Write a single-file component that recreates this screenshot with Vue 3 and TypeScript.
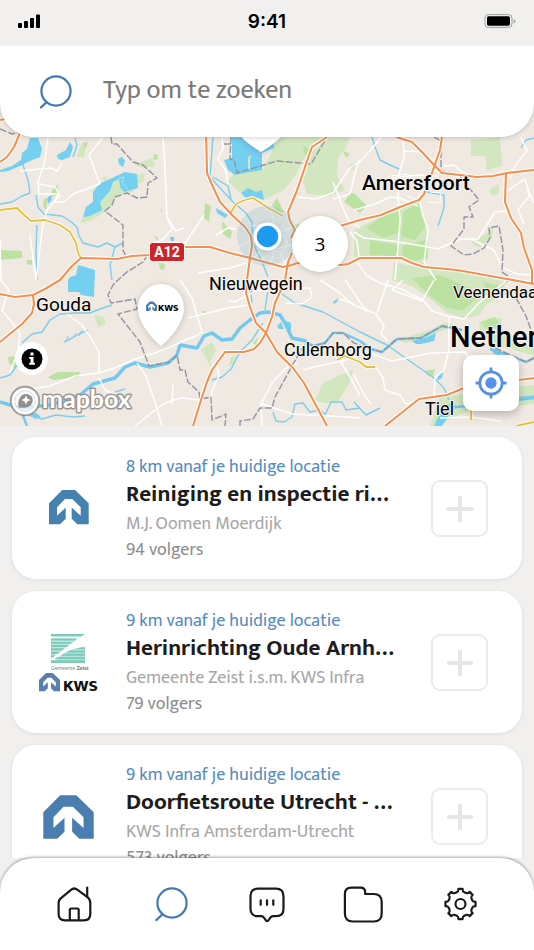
<script setup lang="ts">
import { ref } from 'vue'

interface Project {
  distance: string
  title: string
  owner: string
  followers: string
  logo: 'small' | 'zeist' | 'large'
}

interface Place {
  name: string
  x: number
  y: number
  size: number
  weight: number
}

const query = ref('')

const projects: Project[] = [
  { distance: '8 km vanaf je huidige locatie', title: 'Reiniging en inspectie ri…', owner: 'M.J. Oomen Moerdijk', followers: '94 volgers', logo: 'small' },
  { distance: '9 km vanaf je huidige locatie', title: 'Herinrichting Oude Arnh…', owner: 'Gemeente Zeist i.s.m. KWS Infra', followers: '79 volgers', logo: 'zeist' },
  { distance: '9 km vanaf je huidige locatie', title: 'Doorfietsroute Utrecht - …', owner: 'KWS Infra Amsterdam-Utrecht', followers: '573 volgers', logo: 'large' },
]

const places: Place[] = [
  { name: 'Amersfoort', x: 362, y: 190, size: 21, weight: 500 },
  { name: 'Nieuwegein', x: 209, y: 290, size: 18, weight: 400 },
  { name: 'Gouda', x: 36, y: 311, size: 19, weight: 400 },
  { name: 'Veenendaal', x: 453, y: 298, size: 17, weight: 400 },
  { name: 'Culemborg', x: 284, y: 356, size: 18, weight: 400 },
  { name: 'Tiel', x: 425, y: 415, size: 18, weight: 400 },
]

const house = 'M0 13.3 13.3 0H26L39.7 13.3V34.3H28.3L22.7 28.7V17.6L31.7 25.7V17.3L23.3 9H16L8 17.3V25.7L16.7 17.6V28.7L11 34.3H0Z'

const paleGreens = [
  '275,137 327,137 312,150 303,160 296,175 284,190 266,199 250,195 240,192 228,182 234,173 262,170 272,152',
  '330,137 350,137 346,148 338,158 337,176 345,190 330,196 307,194 303,182 312,152',
  '80,223 90,205 100,190 120,178 145,173 143,182 137,184 133,192 117,195 111,206 103,213 92,220',
  '354,230 381,217 419,202 426,227 429,250 424,267 401,257 354,258',
  '394,262 424,269 457,272 507,282 500,296 487,304 478,316 464,318 447,313 432,300 412,286 392,280',
  '471,140 500,137 502,165 487,171 485,156 471,156',
  '489,190 499,184 499,193 492,196',
  '323,383 342,374 353,370 350,382 342,395 337,403 323,403 315,400',
  '479,323 490,318 502,318 499,330 512,340 534,346 534,356 500,346 480,334',
  '398,340 430,330 445,323 460,326 440,331 422,340 405,343',
  '201,350 212,342 216,350 210,362 213,371 206,358',
  '471,240 486,234 493,226 492,238 480,247 474,246',
  '440,397 534,385 534,404 470,410 436,426 430,426',
  '231,357 236,356 234,364 229,366',
  '94,315 103,316 106,324 98,327',
  '80,146 87,142 84,157 77,157',
  '102,178 107,176 106,182',
  '134,165 152,158 155,166 144,168',
  '348,167 358,160 356,170',
  '160,208 163,211 161,213',
]

const greens = [
  '354,193 367,206 360,213 344,202 350,193',
  '381,217 400,211 400,232 384,238 366,228',
  '403,212 419,203 426,225 415,240 401,236',
  '370,240 398,245 396,256 370,255',
  '402,246 426,240 428,258 412,261 403,256',
  '412,278 440,275 465,286 480,296 462,311 446,307 430,296',
  '483,282 500,286 490,298',
  '0,250 22,251 22,258 0,260',
  '48,377 58,372 80,372 79,377 53,380',
  '8,357 20,356 15,369 9,363',
  '205,203 211,206 209,222 204,218',
  '222,221 232,232 230,239 223,234',
  '44,199 47,199 46,210 43,206',
  '52,190 58,184 57,195 51,197',
  '82,143 88,142 86,148',
  '27,260 32,260 32,265 27,264',
  '44,205 47,202 46,211',
  '272,205 277,198 284,212 278,212',
  '295,225 306,222 307,232 298,234',
  '425,371 435,369 433,377 428,376',
  '480,322 495,317 500,325 488,330',
  '154,235 158,238 157,241',
  '159,263 165,264 164,270 160,269',
  '253,343 258,337 256,346',
  '202,311 206,311 205,315',
  '154,154 158,155 157,160 153,159',
  '343,151 350,154 346,158',
  '303,146 310,149 305,156',
]

const waters = [
  '22,153 27,149 30,138 38,138 42,149 40,157 32,160 20,166 8,171 0,172 0,170 12,166 21,160',
  '57,155 66,150 70,142 73,147 70,157 62,160 58,159',
  '118,159 122,157 125,161 123,167 119,164',
  '83,217 86,207 93,202 93,192 99,184 125,172 137,174 138,188 124,192 120,187 119,179 113,182 110,191 100,202 102,210 90,216',
  '232,137 274,137 274,148 262,153 262,170 245,173 235,175 228,170 224,160 232,158',
  '68,280 70,277 76,275 78,265 85,267 95,270 94,297 81,295 79,292 68,292',
  '216,208 228,215 225,218 217,213',
  '241,193 248,188 256,192 262,190 264,200 258,198 252,196 246,198',
  '47,198 51,195 52,200 48,204',
  '170,237 174,237 174,241 171,241',
  '277,326 281,322 284,329 279,329',
  '286,321 291,323 291,331 286,328',
  '333,302 338,298 337,302 334,304',
  '412,341 425,338 436,333 434,341 421,344 416,344',
  '438,375 443,372 442,378 437,381',
  '30,414 36,413 41,417 35,419',
  '490,348 497,350 502,356 494,354',
  '437,419 448,404 456,405 442,426 434,426',
]

const streams = [
  '22,162 28,180 30,193 22,196 12,202 0,204',
  '36,195 38,207 44,214 62,216 70,221 77,227 79,236 83,243 98,247 107,243 115,247 123,243',
  '115,247 110,265 112,280',
  '75,138 77,145 73,157',
  '37,225 36,250 37,280',
  '213,137 210,177 222,190 233,202 246,213 252,222 253,243 262,262 268,277',
  '213,177 228,186 231,199',
  '253,280 251,293 252,303',
  '271,280 267,296 265,310',
  '0,378 10,375 18,364 22,348',
  '22,343 32,334 42,332 50,320 60,314 75,313 90,313 100,309 112,305',
  '64,342 72,338 79,334 88,330',
  '282,294 295,303 323,312 360,332 387,345 434,378 444,388 449,400',
  '212,380 222,377 231,369 240,352 252,340 263,323',
  '372,137 375,147 380,160 390,165 399,169',
  '427,192 444,195 444,208 438,226',
  '273,412 276,421 284,422 292,417 295,404 303,403 310,412 320,410 325,415 331,402 342,402 346,410 360,408',
  '28,415 42,419 56,415 73,417 85,416',
  '500,400 534,396',
  '115,392 125,389',
  '354,402 366,415 380,408',
  '521,148 526,140 534,138',
]

const rivers = [
  '0,402 20,408 50,405 80,395 93,384 115,378 125,367 135,363 150,367 168,363 177,355 180,345 197,348 204,336 212,333 222,340 232,339 240,328 250,320 260,313 268,312 280,315 285,323 292,338 306,341',
]

const minorRivers = [
  '20,408 27,426',
  '306,341 313,346 325,343 333,333 343,333 360,341 371,349 382,352 397,339 421,338 442,326 462,330',
  '490,349 508,355 526,362 534,358',
  '448,408 475,405 534,398',
]

const roads = [
  '48,137 45,160 38,182 39,194 58,194 55,201 47,210 43,225 40,247 36,280',
  '39,184 55,187 60,196 54,202 64,202 73,194 100,184',
  '89,155 100,184',
  '89,155 103,137',
  '20,171 51,168 57,171 62,163',
  '163,137 165,168 167,217 172,229 162,240 150,246',
  '167,217 176,231 184,228',
  '0,240 1,280 9,290 2,310 10,320 20,333 18,350 10,373',
  '30,235 36,280',
  '30,389 50,386 75,376 98,373 115,368 135,359 155,353 180,343',
  '67,314 82,325 91,338 99,352 99,372',
  '99,378 105,390 120,397',
  '137,363 146,376 155,402 162,426',
  '135,426 150,414 165,403 180,398',
  '173,385 172,404',
  '180,280 192,298 202,332 196,336 180,342',
  '180,251 184,245 204,215',
  '188,318 228,308 249,305',
  '228,301 235,302 258,290 276,292',
  '284,288 310,288 312,297 302,304 286,303',
  '320,280 340,293 352,304 376,314 384,326 381,334 388,341',
  '345,280 367,312',
  '388,280 377,313',
  '333,199 350,194 357,165 375,145 381,137',
  '297,197 315,199 333,193 349,169 360,160',
  '333,182 343,208 348,219 360,228',
  '354,232 364,238 392,241 423,246 438,249 460,239 478,239 495,212 506,211',
  '354,210 375,204 390,197 400,198 418,206',
  '403,137 404,158 399,174 398,194 400,220 398,247 395,280',
  '419,200 423,216 428,230 424,262 436,280',
  '391,178 418,175 438,176',
  '404,151 424,152 434,162',
  '444,166 454,165 462,172 470,175',
  '471,239 494,250 502,267 517,274 534,275',
  '521,137 527,151 516,164 510,178',
  '507,191 525,179 530,195 518,210 524,224',
  '527,190 534,203',
  '354,258 367,276 380,283 401,289 423,300 432,311 447,316 464,319',
  '464,319 480,302 507,280',
  '403,280 392,290 422,301 434,280',
  '449,317 449,350 444,370 435,378 434,397',
  '297,363 285,369 272,383 261,404 262,426',
  '303,370 319,366 346,360 366,352 392,361 431,353 465,352 471,360',
  '259,403 292,414 330,416 360,418',
  '341,362 350,377 360,396',
  '376,367 383,378 385,390 400,395 406,404 414,402 426,397',
  '354,375 365,396 371,404',
  '180,398 200,400',
  '217,364 219,376 212,391 211,402',
  '340,299 354,304',
  '440,418 470,417 501,421',
  '216,235 228,228 236,229',
  '198,273 230,268 246,263',
  '350,232 357,241 359,256',
  '222,137 223,148 218,159 226,171 228,184',
]

const streets = [
  '238,247 260,237 292,228',
  '252,260 262,250 284,226',
  '258,262 276,249 292,245',
  '257,248 280,252 286,266',
  '264,225 282,234 292,250',
  '273,216 275,246 271,263',
  '243,216 252,226 266,224',
  '382,184 390,176 406,174 418,183',
  '405,195 417,200 421,190',
  '430,192 441,193 440,203 428,202',
]

const motorways = [
  '0,120 5,119',
  '0,162 7,157 14,147 20,133',
  '0,294 15,297 33,295 45,289 60,280 72,266 81,258 117,259 132,256 150,255 186,247 210,247 230,253 250,258 283,267 292,265 297,263 340,265 348,264 360,258 401,258 412,263 424,267 457,270 507,279 534,284',
  '33,295 34,304 32,313 22,324 0,342',
  '206,130 207,173 213,187 220,202 232,215 245,227 251,236 252,246 250,258 247,280 246,293 250,307 256,323 266,333 277,352 293,368 304,383 327,426',
  '327,137 312,147 308,158 303,173 296,193 288,212 290,221 295,230 291,238',
  '292,253 288,262 287,268 285,280 281,290 275,303 272,317 266,333 260,343 254,349 244,352 225,352 212,370 207,382 202,397 193,426',
  '340,226 360,220 381,215 400,207 419,200 424,194 427,187 434,167 440,150 442,137',
  '396,137 412,142 422,152 434,165 442,173 460,175 477,177 493,176 507,173 534,170',
  '506,173 505,202 511,218 521,233 524,248 532,270 532,284',
  '385,426 419,399 447,395 464,388 519,380 534,378',
]

const yellowRoads = [
  '0,210 17,208 23,214 31,221 45,220 60,225 70,232 76,243 78,253 81,258',
  '230,214 236,204 245,200 253,198 270,209 283,216',
  '337,360 345,356 360,362 366,367 375,367',
  '471,410 471,420',
  '516,426 534,422',
]

const borders = [
  '111,137 112,144 117,144 133,162 143,165 157,178 148,183 147,197 137,198 127,193 115,197 112,205 105,211 123,225 123,250 126,257 147,256 143,262 127,272 118,280 113,285 108,295 111,303 135,299 137,309 118,314 140,342 149,366 170,362 177,355 180,370 185,370 188,382 199,392 200,399 211,397 212,420 226,414 225,426',
  '240,426 240,421 253,419 260,408 272,408 275,397 297,357 306,343 313,346 325,343 333,333 343,333 354,343 371,349 382,352 397,339 421,338 442,326 462,330',
  '231,137 230,159 234,160 237,173 277,161 311,164 327,137',
  '224,144 231,144',
  '434,137 441,141 441,171 459,174 470,189 479,200 469,207 473,217 464,217 464,229 451,246 464,255 473,254 484,248 490,238 489,228 499,226 503,250 502,272 508,276 507,282',
  '516,298 526,316 531,330 534,336',
  '495,348 515,357 526,362 534,358',
  '0,129 12,134 22,132',
]

// Outline of a cogwheel with eight rounded teeth, centred on (cx, cy).
function cog(cx: number, cy: number): string {
  const parts: string[] = []
  const at = (radius: number, degrees: number): string => {
    const angle = (degrees * Math.PI) / 180
    return `${(cx + radius * Math.cos(angle)).toFixed(2)} ${(cy + radius * Math.sin(angle)).toFixed(2)}`
  }
  for (let tooth = 0; tooth < 8; tooth++) {
    const mid = tooth * 45
    parts.push(`${tooth === 0 ? 'M' : 'L'}${at(15.2, mid - 8)}`)
    parts.push(`L${at(15.2, mid + 8)}`)
    parts.push(`Q${at(12.8, mid + 10)} ${at(12.7, mid + 14)}`)
    parts.push(`Q${at(11.8, mid + 22.5)} ${at(12.7, mid + 31)}`)
    parts.push(`Q${at(12.8, mid + 35)} ${at(15.2, mid + 37)}`)
  }
  return parts.join('') + 'Z'
}

const cogPath = cog(20.5, 21)
</script>

<template>
  <div class="app">
    <header class="status">
      <svg class="signal" width="24" height="14" viewBox="0 0 24 14" aria-hidden="true">
        <rect x="0" y="9" width="4" height="5" rx="1" />
        <rect x="6" y="7" width="4" height="7" rx="1" />
        <rect x="12" y="4" width="4" height="10" rx="1" />
        <rect x="18" y="0.5" width="4" height="13.5" rx="1" />
      </svg>
      <time class="clock">9:41</time>
      <svg class="battery" width="32" height="14" viewBox="0 0 32 14" aria-hidden="true">
        <rect x="1" y="0.6" width="27" height="12.8" rx="3.4" fill="none" stroke="#a2a2a1" />
        <rect x="3" y="2.3" width="23" height="9.4" rx="1.6" />
        <path d="M29.6 5v4.4q1.8-.8 1.8-2.2T29.6 5Z" fill="#a2a2a1" />
      </svg>
    </header>

    <section class="map">
      <svg class="canvas" viewBox="0 46 534 380" preserveAspectRatio="xMidYMid slice">
        <rect x="0" y="46" width="534" height="380" fill="#efe9e1" />
        <g fill="#d2e6c0"><polygon v-for="p in paleGreens" :key="p" :points="p" /></g>
        <g fill="#bbe2a0"><polygon v-for="p in greens" :key="p" :points="p" /></g>
        <g fill="#75cff0"><polygon v-for="p in waters" :key="p" :points="p" /></g>
        <path d="M119 178 124 177 122 183 128 189" class="line" stroke="#d2e6c0" stroke-width="0.8" />
        <path d="M249 170V158L251 156" class="line" stroke="#d2e6c0" stroke-width="2" />
        <g class="line" stroke="#7ccdee" stroke-width="1.4"><polyline v-for="p in streams" :key="p" :points="p" /></g>
        <path class="line" stroke="#7ccdee" d="M66 342 68 336M73 338 76 333M79 336 82 330" />
        <g class="line" stroke="#72c8ef" stroke-width="2.4"><polyline v-for="p in minorRivers" :key="p" :points="p" /></g>
        <g class="line" stroke="#72c8ef" stroke-width="3.4"><polyline v-for="p in rivers" :key="p" :points="p" /></g>
        <g class="line" stroke="#fff"><polyline v-for="p in streets" :key="p" :points="p" /></g>
        <g class="line" stroke="#fff" stroke-width="1.5"><polyline v-for="p in roads" :key="p" :points="p" /></g>
        <g class="line border" stroke="#9193a3" stroke-width="1.4"><polyline v-for="p in borders" :key="p" :points="p" /></g>
        <g class="line" stroke="#fff" stroke-width="4.2"><polyline v-for="p in motorways" :key="p" :points="p" /></g>
        <g class="line" stroke="#fff" stroke-width="3.4"><polyline v-for="p in yellowRoads" :key="p" :points="p" /></g>
        <g class="line" stroke="#e6bf3c" stroke-width="1.8"><polyline v-for="p in yellowRoads" :key="p" :points="p" /></g>
        <g class="line" stroke="#f3904f" stroke-width="2.1"><polyline v-for="p in motorways" :key="p" :points="p" /></g>

        <circle cx="267" cy="236" r="30" fill="#6ba9c9" opacity="0.2" />

        <g class="labels">
          <text v-for="place in places" :key="place.name" :x="place.x" :y="place.y" :font-size="place.size" :font-weight="place.weight">{{ place.name }}</text>
          <text x="450" y="347" font-size="29" font-weight="500">Netherlands</text>
        </g>

        <rect x="149.5" y="242.5" width="35" height="19" rx="3" fill="#cc2529" stroke="#fff" />
        <text class="shield" x="167" y="257">A12</text>

        <g class="raised">
          <path d="M238 128h46c0 9-9 15-23 24-14-9-23-15-23-24Z" fill="#fff" />
          <path d="M161 346c-9-7-23-23-23-38a23 24 0 0 1 46 0c0 15-14 31-23 38Z" fill="#fff" />
          <circle cx="320" cy="244" r="28" fill="#fff" />
          <circle cx="267.5" cy="236.5" r="14" fill="#fff" />
        </g>
        <path :d="house" fill="#4a7eb0" transform="translate(146 301.5) scale(0.28)" />
        <text class="pin-name" x="158" y="311">KWS</text>
        <circle cx="267.5" cy="236.5" r="10.7" fill="#1d9bf0" />
        <text class="cluster" x="320" y="251">3</text>

        <g class="mapbox">
          <circle cx="25" cy="401" r="12.5" fill="none" stroke="#8b8b8b" stroke-width="5.5" opacity="0.8" />
          <circle cx="25" cy="401" r="12" fill="#fff" opacity="0.7" />
          <circle cx="25" cy="401" r="12" fill="none" stroke="#fff" stroke-width="2.6" />
          <path d="M18.5 407.500c-.8-5 .2-9 2.700-11.500 3-2.800 7.400-2.500 9.800.1 2.300 2.500 2.300 6.500-.3 9.100-2.700 2.500-7.200 3-12.200 2.300Z" fill="#8f8f8f" />
          <path d="m26 395.500 1.400 3.100 3.100 1.400-3.100 1.400-1.400 3.100-1.400-3.100-3.100-1.400 3.100-1.400Z" fill="#fff" />
          <text x="42" y="408">mapbox</text>
        </g>
      </svg>

      <label class="search">
        <svg width="40" height="40" viewBox="0 0 40 40" class="glyph" aria-hidden="true">
          <circle cx="20" cy="20" r="14.6" />
          <path d="m10.500 31.200-5.500 5.200" />
        </svg>
        <input v-model="query" type="text" placeholder="Typ om te zoeken" aria-label="Typ om te zoeken" />
      </label>

      <button class="info" type="button" aria-label="Kaartinformatie">
        <svg width="22" height="22" viewBox="0 0 22 22">
          <circle cx="11" cy="11" r="10.5" />
          <path d="M9.500 4.500h3v3h-3zM8.300 9h4.200v5.700h1.400v2H8.200v-2h1.400V11H8.300Z" fill="#fff" />
        </svg>
      </button>

      <button class="locate" type="button" aria-label="Mijn locatie">
        <svg width="34" height="34" viewBox="0 0 34 34">
          <circle cx="17" cy="17" r="11.2" fill="none" stroke="#5592e6" stroke-width="2.8" />
          <circle cx="17" cy="17" r="5.7" fill="#5592e6" />
          <path d="M17 1.500v5M17 27.500v5M1.500 17h5M27.500 17h5" stroke="#5592e6" stroke-width="2.8" />
        </svg>
      </button>
    </section>

    <main class="list">
      <article v-for="project in projects" :key="project.title" class="card">
        <svg class="logo" width="68" height="68" viewBox="0 0 68 68" aria-hidden="true">
          <path v-if="project.logo === 'small'" :d="house" fill="#4682b0" transform="translate(15 15)" />
          <path v-else-if="project.logo === 'large'" :d="house" fill="#4a7eb0" transform="translate(9.3 12.3) scale(1.27)" />
          <g v-else>
            <g fill="#7ccab9">
              <path d="M17 5h34l-4 2.600H17Z" />
              <path d="M17 9.500h26.500l-2.600 1.900H17ZM17 12.900h22.300l-2.500 1.800H17ZM17 16h18.300l-2.800 2H17ZM17 19.300h14l-3 2.100H17ZM17 22.700h9.700L23.500 25H17ZM17 26.300h4.800l-3.400 2.500H17Z" />
              <path d="M51 18.300v1.800h-9.800c2.700-1.200 5.500-1.800 9.800-1.800ZM36 21.400h15v2H32.500ZM30 24.700h21v2.100H26.500ZM24 28h27v2.100H20ZM17 31.300h34V34H17Z" />
              <path d="M51 18.300V34H19c6-5.500 13-15 32-15.700Z" opacity="0.55" />
              <path d="M17 9.500h26.500L17 29Z" opacity="0.45" />
            </g>
            <text class="zeist" x="17" y="41">Gemeente <tspan font-weight="700">Zeist</tspan></text>
            <path :d="house" fill="#587fb0" transform="translate(5 44) scale(0.53)" />
            <text class="kws" x="29" y="62">KWS</text>
          </g>
        </svg>
        <div class="details">
          <p class="distance">{{ project.distance }}</p>
          <h2 class="title">{{ project.title }}</h2>
          <p class="owner">{{ project.owner }}</p>
          <p class="followers">{{ project.followers }}</p>
        </div>
        <button class="add" type="button" aria-label="Volgen">
          <svg width="28" height="28" viewBox="0 0 28 28">
            <path d="M14 2.500v23M2.500 14h23" />
          </svg>
        </button>
      </article>
    </main>

    <nav class="tabs">
      <a href="#home" aria-label="Home">
        <svg width="40" height="40" viewBox="0 0 40 40" class="glyph">
          <path d="M4.600 20c0-2.200.7-3.700 2.400-4.900l10-8.300q3.200-2.600 6.600 0l9.800 7.300c2 1.500 2.900 3.200 2.900 5.700V31q0 6.300-6.300 6.300H10.900q-6.300 0-6.300-6.300Z" />
          <path d="M33.200 4.500v9.200M15.800 37V27q0-1.500 1.500-1.500h5.900q1.500 0 1.500 1.500v10" />
        </svg>
      </a>
      <a href="#zoeken" class="active" aria-label="Zoeken" aria-current="page">
        <svg width="40" height="40" viewBox="0 0 40 40" class="glyph">
          <circle cx="21" cy="20" r="14.6" />
          <path d="m11.500 31.200-6.200 5.900" />
        </svg>
      </a>
      <a href="#berichten" aria-label="Berichten">
        <svg width="40" height="40" viewBox="0 0 40 40" class="glyph">
          <path d="M11 5.700h18q7.500 0 7.500 7.500v12.500q0 7.500-7.500 7.500h-3c-1.300 0-2 .5-2.600 1.400l-1.800 2.600q-1.300 1.700-2.800 0l-1.900-2.600c-.6-.9-1.300-1.400-2.600-1.400H11q-7.500 0-7.500-7.500V13.200q0-7.500 7.500-7.500Z" />
          <path d="M13.700 17.300v4.500M20 17.300v4.500M26.300 17.300v4.500" />
        </svg>
      </a>
      <a href="#projecten" aria-label="Projecten">
        <svg width="40" height="40" viewBox="0 0 40 40" class="glyph">
          <path d="M8.400 4.600h9.100q4.700 0 4.700 4.600v1.800h8.500q8 0 8 8v11.500q0 8-8 8H9.900q-8 0-8-8V11q0-6.400 6.500-6.400Z" />
        </svg>
      </a>
      <a href="#instellingen" aria-label="Instellingen">
        <svg width="40" height="40" viewBox="0 0 40 40" class="glyph">
          <path :d="cogPath" />
          <circle cx="20.5" cy="21" r="5" />
        </svg>
      </a>
    </nav>
  </div>
</template>

<style>
body {
  background: #f1f0ee;
}
</style>

<style scoped>
.app {
  display: flex;
  flex-direction: column;
  height: 100vh;
  overflow: hidden;
  background: #f1f0ee;
  color: #1d1d1d;
  font-family: "Mukta", "Open Sans", "Noto Sans", sans-serif;
}

button {
  display: grid;
  place-items: center;
  padding: 0;
  border: 0;
  background: #fff;
  cursor: pointer;
}

.status {
  display: grid;
  grid-template-columns: 1fr auto 1fr;
  align-items: center;
  flex: none;
  box-sizing: border-box;
  height: 46px;
  padding: 0 18px 4px;
  color: #000;
}

.clock {
  font-family: "Inter", sans-serif;
  font-size: 19px;
  font-weight: 600;
}

.battery {
  justify-self: end;
}

.map {
  position: relative;
  flex: none;
  height: 380px;
  overflow: hidden;
}

.canvas {
  display: block;
  width: 100%;
  height: 100%;
}

.line {
  fill: none;
  stroke-linejoin: round;
}

.border {
  stroke-dasharray: 7 2;
}

.labels text {
  fill: #000;
  font-family: "Roboto", sans-serif;
  stroke: #f6f2ed;
  stroke-width: 2px;
  stroke-linejoin: round;
  paint-order: stroke;
}

.shield {
  fill: #fff;
  font: 700 14px "Roboto", sans-serif;
  text-anchor: middle;
}

.raised {
  filter: drop-shadow(0 1px 3px rgba(0, 0, 0, 0.18));
}

.pin-name {
  font: 800 10px "Mukta", "Open Sans", sans-serif;
}

.cluster {
  font: 400 19px "Open Sans", sans-serif;
  text-anchor: middle;
}

.mapbox text {
  fill: #fff;
  font: 700 25px "Lato", sans-serif;
  stroke: #999795;
  stroke-width: 3px;
  stroke-linejoin: round;
  paint-order: stroke;
}

.search {
  position: absolute;
  inset: 0 0 auto;
  display: flex;
  align-items: center;
  gap: 27px;
  box-sizing: border-box;
  height: 91px;
  padding: 0 36px 2px;
  border-radius: 0 0 34px 34px;
  background: #fff;
  box-shadow: 0 1px 5px rgba(0, 0, 0, 0.18);
  color: #4079b3;
}

.search input {
  flex: 1;
  min-width: 0;
  padding: 0;
  border: 0;
  outline: 0;
  background: none;
  color: #333;
  font: inherit;
  font-size: 26px;
}

.search input::placeholder {
  color: #7b7b7b;
  opacity: 1;
}

.glyph {
  display: block;
  flex: none;
  fill: none;
  stroke: currentColor;
  stroke-width: 2.2px;
  stroke-linecap: round;
  stroke-linejoin: round;
}

.info {
  position: absolute;
  left: 15px;
  bottom: 51px;
  width: 33px;
  height: 33px;
  border-radius: 50%;
}

.locate {
  position: absolute;
  right: 15px;
  bottom: 15px;
  width: 56px;
  height: 56px;
  border-radius: 10px;
  box-shadow: 0 3px 10px rgba(0, 0, 0, 0.25);
}

.list {
  display: flex;
  flex: 1;
  flex-direction: column;
  gap: 12px;
  min-height: 0;
  padding: 11px 12px 0;
  overflow: hidden;
}

.card {
  display: flex;
  flex: none;
  align-items: center;
  gap: 24px;
  padding: 17px 34px 16px 22px;
  border-radius: 24px;
  background: #fff;
  box-shadow: 0 1px 4px rgba(0, 0, 0, 0.08);
}

.logo {
  flex: none;
}

.details {
  flex: 1;
  min-width: 0;
  white-space: nowrap;
}

.details p,
.title {
  margin: 0;
  font-size: 18px;
  font-weight: 400;
  line-height: 26px;
}

.details .distance {
  color: #568dbf;
}

.title {
  margin-bottom: 3px;
  font-size: 23px;
  font-weight: 700;
  line-height: 28px;
}

.details .owner {
  color: #a8a8a8;
}

.details .followers {
  color: #8e8e8e;
}

.zeist {
  fill: #777;
  font: 400 5px "Open Sans", sans-serif;
}

.kws {
  fill: #111;
  font: 800 17px "Mukta", "Open Sans", sans-serif;
}

.add {
  flex: none;
  width: 57px;
  height: 57px;
  border: 2px solid #ebebeb;
  border-radius: 9px;
}

.add path {
  stroke: #e6e6e6;
  stroke-width: 4px;
  stroke-linecap: round;
}

.tabs {
  display: grid;
  grid-template-columns: repeat(5, 1fr);
  flex: none;
  place-items: center;
  box-sizing: border-box;
  height: 92px;
  padding: 0 26px 2px;
  border-radius: 34px 34px 0 0;
  background: #fff;
  box-shadow: 0 -1px 3px rgba(0, 0, 0, 0.35);
}

.tabs a {
  color: #1a1a1a;
}

.tabs .active {
  color: #4079b3;
}
</style>
